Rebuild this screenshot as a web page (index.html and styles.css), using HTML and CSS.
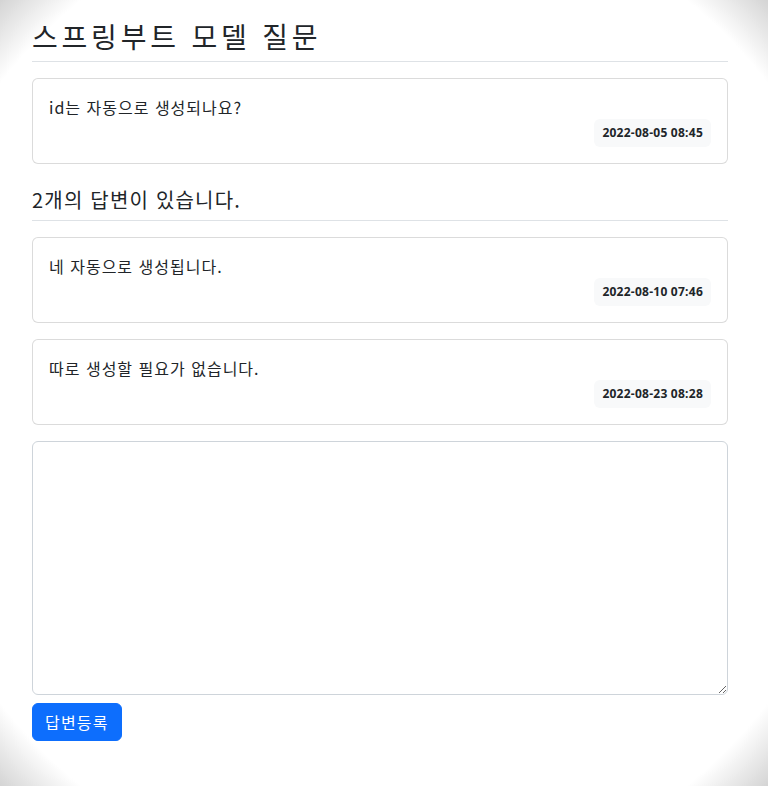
FILE: index.html
```html
<!DOCTYPE html>
<html lang="ko">
<head>
<meta charset="utf-8">
<title>스프링부트 모델 질문</title>
<link rel="stylesheet" href="styles.css">
</head>
<body>
<div class="container">
  <h2 class="title">스프링부트 모델 질문</h2>
  <div class="card">
    <div class="card-body">
      <div class="card-text">id는 자동으로 생성되나요?</div>
      <div class="meta"><span class="badge">2022-08-05 08:45</span></div>
    </div>
  </div>
  <h5 class="count">2개의 답변이 있습니다.</h5>
  <div class="card">
    <div class="card-body">
      <div class="card-text">네 자동으로 생성됩니다.</div>
      <div class="meta"><span class="badge">2022-08-10 07:46</span></div>
    </div>
  </div>
  <div class="card">
    <div class="card-body">
      <div class="card-text">따로 생성할 필요가 없습니다.</div>
      <div class="meta"><span class="badge">2022-08-23 08:28</span></div>
    </div>
  </div>
  <form class="answer-form">
    <textarea class="form-control" rows="10"></textarea>
    <button type="button" class="btn">답변등록</button>
  </form>
</div>
</body>
</html>
```
FILE: styles.css
```css
html {
  min-height: 100%;
  background: radial-gradient(ellipse farthest-corner at center, #ffffff 90%, #d4d4d4 100%);
}
body {
  margin: 0;
  min-height: 786px;
  font-family: "Noto Sans CJK KR", "Noto Sans", sans-serif;
  font-size: 16px;
  line-height: 24px;
  color: #212529;
}
.container {
  width: 696px;
  margin-left: 32px;
  padding-top: 11px;
}
.title {
  margin: 0;
  padding: 8px 0;
  font-size: 28px;
  line-height: 34px;
  font-weight: 400;
  letter-spacing: 3.8px;
  border-bottom: 1px solid #dee2e6;
}
.card {
  margin: 16px 0;
  background: #fff;
  border: 1px solid rgba(0, 0, 0, 0.14);
  border-radius: 6px;
}
.card-body {
  padding: 16px;
}
.card-text {
  white-space: pre-line;
  letter-spacing: 1px;
}
.meta {
  display: flex;
  justify-content: flex-end;
}
.badge {
  display: inline-block;
  padding: 8px;
  font-family: "Open Sans", "Noto Sans", sans-serif;
  font-size: 12px;
  line-height: 12px;
  font-weight: 700;
  letter-spacing: 0.25px;
  color: #212529;
  background: #f8f9fa;
  border-radius: 6px;
}
.count {
  margin: 16px 0;
  padding: 8px 0;
  font-size: 20px;
  line-height: 24px;
  font-weight: 400;
  letter-spacing: 1.2px;
  border-bottom: 1px solid #dee2e6;
}
.answer-form {
  margin: 16px 0;
}
.form-control {
  display: block;
  box-sizing: border-box;
  width: 100%;
  height: 254px;
  padding: 6px 12px;
  font: inherit;
  border: 1px solid #ced4da;
  border-radius: 6px;
  background: #fff;
  resize: vertical;
  margin: 0;
}
.btn {
  margin-top: 8px;
  padding: 6px 12px;
  font-family: inherit;
  font-size: 16px;
  line-height: 24px;
  letter-spacing: 1.2px;
  color: #fff;
  background: #0d6efd;
  border: 1px solid #0d6efd;
  border-radius: 6px;
}
```
